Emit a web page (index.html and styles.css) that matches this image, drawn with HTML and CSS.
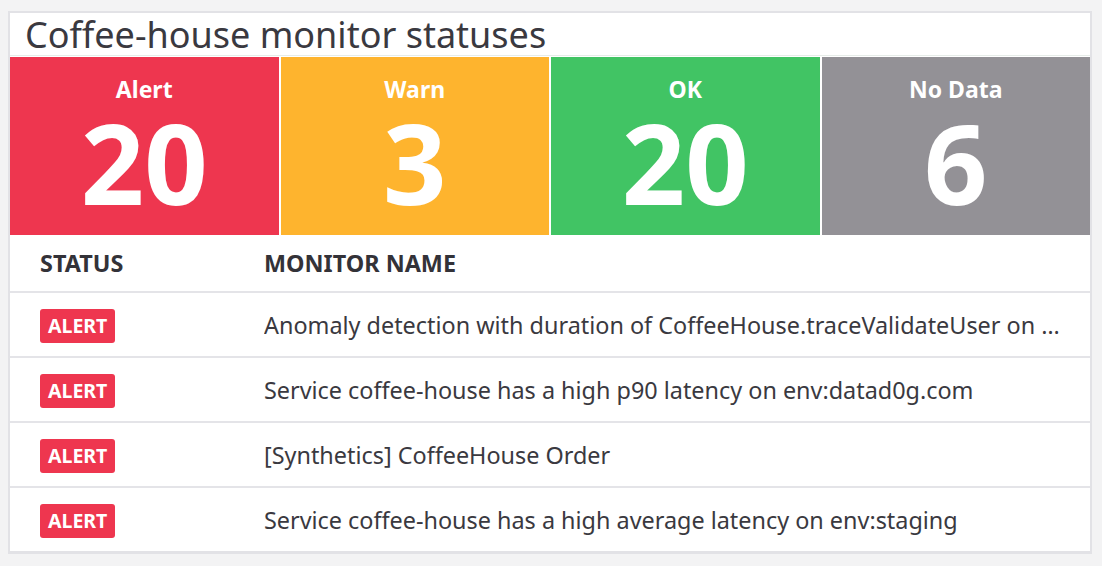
FILE: index.html
```html
<!DOCTYPE html>
<html>
<head>
<meta charset="utf-8">
<link rel="stylesheet" href="styles.css">
</head>
<body>
<div class="card">
  <div class="title">Coffee-house monitor statuses</div>
  <div class="tiles">
    <div class="tile alert"><div class="label">Alert</div><div class="num">20</div></div>
    <div class="tile warn"><div class="label">Warn</div><div class="num">3</div></div>
    <div class="tile ok"><div class="label">OK</div><div class="num">20</div></div>
    <div class="tile nodata"><div class="label">No Data</div><div class="num">6</div></div>
  </div>
  <div class="table">
    <div class="row head"><div class="c1">STATUS</div><div class="c2">MONITOR NAME</div></div>
    <div class="row"><div class="c1"><span class="badge">ALERT</span></div><div class="c2">Anomaly detection with duration of CoffeeHouse.traceValidateUser on env:staging is above the expected bounds</div></div>
    <div class="row"><div class="c1"><span class="badge">ALERT</span></div><div class="c2">Service coffee-house has a high p90 latency on env:datad0g.com</div></div>
    <div class="row"><div class="c1"><span class="badge">ALERT</span></div><div class="c2">[Synthetics] CoffeeHouse Order</div></div>
    <div class="row last"><div class="c1"><span class="badge">ALERT</span></div><div class="c2">Service coffee-house has a high average latency on env:staging</div></div>
  </div>
</div>
</body>
</html>
```
FILE: styles.css
```css
html, body { margin: 0; padding: 0; }
body {
  background: #f3f3f4;
  font-family: "Noto Sans", "Open Sans", sans-serif;
  color: #3a3940;
  width: 1102px;
  height: 566px;
  overflow: hidden;
}
.card {
  margin: 11px 0 0 8px;
  width: 1080px;
  border: 2px solid #e2e2e6;
  border-bottom-width: 3px;
  background: #fff;
}
.title {
  font-size: 36px;
  line-height: 40px;
  padding: 2px 0 0 15px;
  border-bottom: 1px solid #e6ece8;
  white-space: nowrap;
}
.tiles {
  display: grid;
  grid-template-columns: repeat(4, 1fr);
  gap: 2px;
  margin-top: 1px;
}
.tile {
  height: 178px;
  color: #fff;
  text-align: center;
  display: flex;
  flex-direction: column;
  align-items: center;
}
.alert { background: #ee364f; }
.warn { background: #feb42e; }
.ok { background: #41c464; }
.nodata { background: #939196; }
.label {
  font-size: 23px;
  font-weight: 700;
  line-height: 24px;
  margin-top: 20px;
}
.num {
  font-size: 111px;
  font-weight: 700;
  line-height: 96px;
  margin-top: 13px;
}
.row {
  display: flex;
  align-items: center;
  height: 63px;
  border-bottom: 2px solid #e4e4e8;
}
.row.head { height: 56px; }
.row.last { border-bottom: none; height: 63px; }
.c1 { width: 224px; padding-left: 30px; flex: none; }
.c2 {
  flex: 1;
  min-width: 0;
  font-size: 23.4px;
  white-space: nowrap;
  overflow: hidden;
  text-overflow: ellipsis;
  padding-right: 30px;
}
.head .c1, .head .c2 {
  font-size: 23.4px;
  font-weight: 700;
  color: #333238;
}
.badge {
  display: inline-block;
  background: #ee364f;
  color: #fff;
  font-weight: 700;
  font-size: 19.5px;
  line-height: 34px;
  height: 34px;
  padding: 0 8px;
  margin-top: 3px;
  border-radius: 3px;
  vertical-align: middle;
}
```
